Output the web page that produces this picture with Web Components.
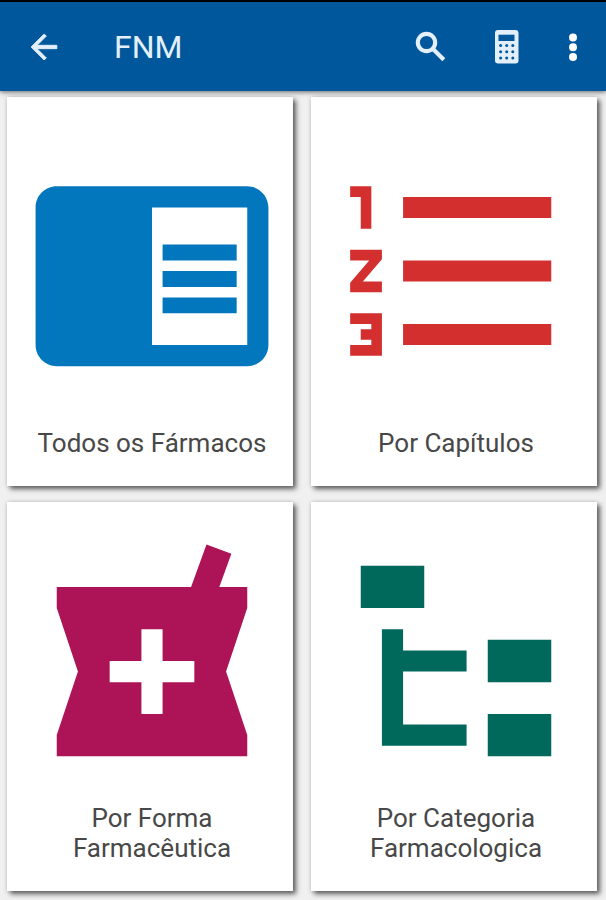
<!DOCTYPE html>
<html lang="pt">
<head>
<meta charset="utf-8">
<meta name="viewport" content="width=device-width, initial-scale=1">
<title>FNM</title>
<style>
  :root{
    --bar-color: #00579c;
    --bar-text: #e3effa;
    --page-color: #f0f0f0;
    --card-color: #fff;
    --text-color: #484848;
  }
  body{
    margin: 0;
    background-color: var(--page-color);
    font-family: Roboto, "Liberation Sans", sans-serif;
  }
</style>
</head>
<body>
<fnm-app></fnm-app>

<script>
class BarButton extends HTMLElement{
    constructor(){
        super();
        const el = this.attachShadow({mode:'open'})
        const label = this.getAttribute('label')
        el.innerHTML = `
        <style>
        :host{
          display: block;
          color: var(--bar-text);
        }
        button{
          display: block;
          padding: 0;
          border: 0;
          background: none;
          color: inherit;
          cursor: pointer;
        }
        ::slotted(svg){
          display: block;
          height: 40px;
          fill: currentColor;
        }
        </style>
        <button type="button" aria-label="${label}"><slot></slot></button>`
    }
}
customElements.define('bar-button', BarButton)

class TopBar extends HTMLElement{
    constructor(){
        super();
        const el = this.attachShadow({mode:'open'})
        el.innerHTML = `
        <style>
        :host{
          display: block;
          position: relative;
          z-index: 1;
          background-color: var(--bar-color);
          border-top: 2px solid #000;
          box-shadow: 0 1px 5px rgba(0,0,0,0.6);
        }
        header{
          display: flex;
          align-items: center;
          height: 89px;
          padding: 0 23px 0 24px;
        }
        h1{
          flex: 1;
          margin: 0 0 0 50px;
          color: var(--bar-text);
          font-size: 32px;
          font-weight: 400;
          line-height: 40px;
        }
        .actions{
          display: flex;
          gap: 36px;
        }
        </style>
        <header>
          <bar-button label="Voltar">
            <svg viewBox="0 0 24 24" width="40"><path stroke="currentColor" stroke-width=".6" d="M19.7 11H7.83l5.59-5.59L12 4.3l-7.7 7.7 7.7 7.7 1.41-1.11L7.83 13H19.7v-2z"/></svg>
          </bar-button>
          <h1><slot></slot></h1>
          <div class="actions">
            <bar-button label="Pesquisar">
              <svg viewBox="0 0 24 24" width="40"><g fill="none" stroke="currentColor" stroke-width="2.5"><circle cx="9.3" cy="9.3" r="5.2"/><path d="M13.2 13.2l6.5 6.5"/></g></svg>
            </bar-button>
            <bar-button label="Calculadora">
              <svg viewBox="0 0 40 40" width="40">
                <rect x="8" y="3" width="23.5" height="33.5" rx="3"/>
                <g fill="#00579c">
                  <rect x="11.5" y="7.7" width="16" height="6.3"/>
                  <circle cx="13.6" cy="18.5" r="1.5"/><circle cx="19.7" cy="18.5" r="1.5"/><circle cx="25.8" cy="18.5" r="1.5"/>
                  <circle cx="13.6" cy="24.7" r="1.5"/><circle cx="19.7" cy="24.7" r="1.5"/><circle cx="25.8" cy="24.7" r="1.5"/>
                  <circle cx="13.6" cy="31" r="1.5"/><circle cx="19.7" cy="31" r="1.5"/><circle cx="25.8" cy="31" r="1.5"/>
                </g>
              </svg>
            </bar-button>
            <bar-button label="Mais opções">
              <svg viewBox="0 0 20 40" width="20"><g fill="#fff"><circle cx="10" cy="10.5" r="4"/><circle cx="10" cy="20.2" r="4"/><circle cx="10" cy="30" r="4"/></g></svg>
            </bar-button>
          </div>
        </header>`
    }
}
customElements.define('top-bar', TopBar)

class MenuCard extends HTMLElement{
    constructor(){
        super();
        const el = this.attachShadow({mode:'open'})
        const href = this.getAttribute('href')
        el.innerHTML = `
        <style>
        :host{
          display: flex;
          background-color: var(--card-color);
          box-shadow: 3px 3px 5px rgba(0,0,0,0.6), 0 0 4px rgba(0,0,0,0.15);
        }
        a{
          flex: 1;
          display: flex;
          flex-direction: column;
          padding: 16px 14px 28px 18px;
          color: var(--text-color);
          text-decoration: none;
        }
        .picture{
          flex: 1;
          display: flex;
          align-items: center;
          justify-content: center;
        }
        ::slotted(svg){
          display: block;
          width: 100%;
          fill: currentColor;
        }
        .label{
          text-align: center;
          font-size: 26px;
          line-height: 30px;
        }
        </style>
        <a href="${href}">
          <div class="picture"><slot name="icon"></slot></div>
          <div class="label"><slot></slot></div>
        </a>`
    }
}
customElements.define('menu-card', MenuCard)

class FnmApp extends HTMLElement{
    constructor(){
        super();
        const el = this.attachShadow({mode:'open'})
        el.innerHTML = `
        <style>
        :host{
          display: flex;
          flex-direction: column;
          min-height: 100vh;
        }
        main{
          flex: 1;
          display: grid;
          grid-template-columns: 1fr 1fr;
          grid-auto-rows: 1fr;
          gap: 16px 18px;
          padding: 6px 9px 9px 7px;
        }
        .blue{ color: #0277bd; }
        .red{ color: #d32f2f; }
        .pink{ color: #ad1457; }
        .green{ color: #00695c; }
        </style>
        <top-bar>FNM</top-bar>
        <main>
          <menu-card href="#todos">
            <svg slot="icon" class="blue" viewBox="0 0 24 24"><path d="M13 12h7v1.5h-7zm0-2.5h7V11h-7zm0 5h7V16h-7zM21 4H3c-1.1 0-2 .9-2 2v13c0 1.1.9 2 2 2h18c1.1 0 2-.9 2-2V6c0-1.1-.9-2-2-2zm0 15h-9V6h9v13z"/></svg>
            Todos os Fármacos
          </menu-card>
          <menu-card href="#capitulos">
            <svg slot="icon" class="red" viewBox="0 0 24 24"><path d="M7 5h14v2H7zM7 11h14v2H7zM7 17h14v2H7zM2 4h2v4H3V5H2zM2 10h3v.9L3.2 13H5v1H2v-.9L3.8 11H2zM2 16h3v4H2v-1h2v-.5H3v-1h1V17H2z"/></svg>
            Por Capítulos
          </menu-card>
          <menu-card href="#forma">
            <svg slot="icon" class="pink" viewBox="0 0 24 24"><path d="M21 5h-2.64l1.14-3.14L17.15 1l-1.46 4H3v2l2 6-2 6v2h18v-2l-2-6 2-6V5zm-5 9h-3v3h-2v-3H8v-2h3V9h2v3h3v2z"/></svg>
            Por Forma<br>Farmacêutica
          </menu-card>
          <menu-card href="#categoria">
            <svg slot="icon" class="green" viewBox="0 0 24 24"><path d="M3 3h6v4H3zM15 10h6v4h-6zM15 17h6v4h-6zM5 9h2v2h6v2H7v5h6v2H5z"/></svg>
            Por Categoria<br>Farmacologica
          </menu-card>
        </main>`
    }
}
customElements.define('fnm-app', FnmApp)
</script>
</body>
</html>
